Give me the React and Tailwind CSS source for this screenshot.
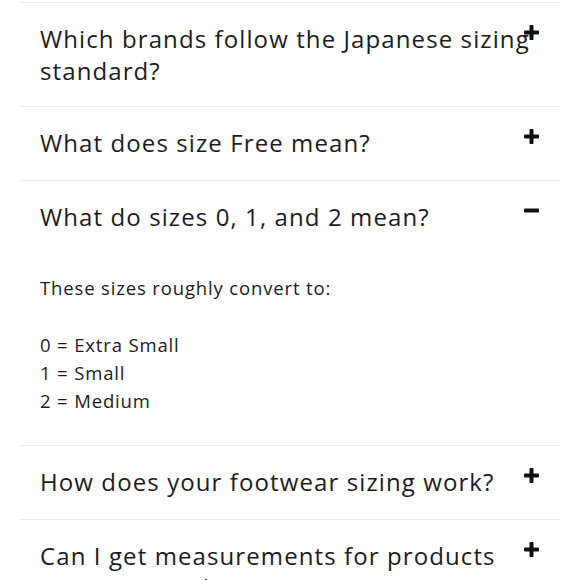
import React from "react";

const faqs = [
    { q: ["Which brands follow the Japanese sizing", "standard?"], open: false },
    { q: ["What does size Free mean?"], open: false },
    {
        q: ["What do sizes 0, 1, and 2 mean?"],
        open: true,
        a: ["These sizes roughly convert to:", "", "0 = Extra Small", "1 = Small", "2 = Medium"],
    },
    { q: ["How does your footwear sizing work?"], open: false },
    { q: ["Can I get measurements for products", "I'm interested in?"], open: false },
];

function PlusIcon() {
    return (
        <svg width="15" height="15" viewBox="0 0 15 15" className="block">
            <rect x="5.5" y="0" width="4" height="15" rx="1" fill="#111" />
            <rect x="0" y="5.5" width="15" height="4" rx="1" fill="#111" />
        </svg>
    );
}

function MinusIcon() {
    return (
        <svg width="15" height="15" viewBox="0 0 15 15" className="block">
            <rect x="0" y="5.5" width="15" height="4" rx="1" fill="#111" />
        </svg>
    );
}

function FaqItem({ item, first }) {
    return (
        <div className="border-b border-[#ebebeb]">
            <div className={first ? "relative px-5 pt-5 pb-[19px]" : "relative px-5 pt-5 pb-[21px]"}>
                <h3 className="text-[24px] leading-[32px] font-normal text-[#1c1c1c] tracking-[1.1px]">
                    {item.q.map((line, i) => (
                        <span key={i} className="block whitespace-nowrap">{line}</span>
                    ))}
                </h3>
                <span className="absolute right-[21px] top-[22px]">
                    {item.open ? <MinusIcon /> : <PlusIcon />}
                </span>
            </div>
            {item.open && (
                <div className="px-5 pt-5 pb-[30px] text-[18.5px] leading-[28.3px] text-[#1c1c1c] tracking-[0.85px]">
                    {item.a.map((line, i) => (
                        <p key={i} className="min-h-[28.3px]">{line}</p>
                    ))}
                </div>
            )}
        </div>
    );
}

export default function App() {
    return (
        <div className="w-[580px] h-[580px] overflow-hidden bg-white" style={{ fontFamily: '"Open Sans", "Liberation Sans", sans-serif' }}>
            <div className="mx-5 mt-[2px] border-t border-[#ebebeb]">
                {faqs.map((item, i) => (
                    <FaqItem key={i} item={item} first={i === 0} />
                ))}
            </div>
        </div>
    );
}
